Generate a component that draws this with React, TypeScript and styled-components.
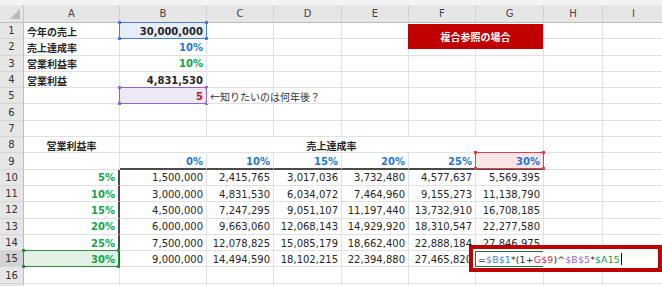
import { createGlobalStyle, styled } from 'styled-components'

const GlobalStyle = createGlobalStyle`
  html, body { margin: 0; padding: 0; background: #fff; }
  body { font-family: "DejaVu Sans", "Noto Sans CJK JP", sans-serif; }
`

const blue = '#1f78d1'
const green = '#10a64a'
const red = '#c00000'
const numFont = `"DejaVu Sans", "Noto Sans CJK JP", sans-serif`
const jpFont = `"Noto Sans CJK JP", "DejaVu Sans", sans-serif`

const COLS = ['A', 'B', 'C', 'D', 'E', 'F', 'G', 'H', 'I']

const Sheet = styled.div`
  position: relative;
  width: 662px;
  height: 286px;
  overflow: hidden;
  padding-top: 5px;
  box-sizing: border-box;
  background: #f3f3f3;
`

const Grid = styled.div`
  display: grid;
  grid-template-columns: 24px 96px 87px 67px 68px 67px 67px 68px 59px 62px;
  grid-template-rows: 18px repeat(17, 16.3px);
  background: #fff;
`

const Corner = styled.div`
  display: flex;
  align-items: flex-end;
  justify-content: flex-end;
  padding: 0 3px 3px 0;
  background: #e6e6e6;
  border-right: 1px solid #c8c8c8;
  border-bottom: 1px solid #bcbcbc;
  box-sizing: border-box;
`

const Triangle = styled.span`
  width: 10px;
  height: 10px;
  background: #b9b9b9;
  clip-path: polygon(100% 0, 100% 100%, 0 100%);
`

const ColHead = styled.div`
  display: flex;
  align-items: center;
  justify-content: center;
  background: #e6e6e6;
  border-right: 1px solid #d2d2d2;
  border-bottom: 1px solid #bcbcbc;
  box-sizing: border-box;
  font-family: ${numFont};
  font-size: 10px;
  color: #444;
`

const RowHead = styled.div<{ $active?: boolean }>`
  display: flex;
  align-items: center;
  justify-content: center;
  background: ${p => (p.$active ? '#d2d2d2' : '#e6e6e6')};
  border-right: 1px solid #bcbcbc;
  border-bottom: 1px solid #d6d6d6;
  box-sizing: border-box;
  font-family: ${numFont};
  font-size: 10px;
  color: #333;
`

const Cell = styled.div<{
  $align?: string
  $color?: string
  $bold?: boolean
  $jp?: boolean
  $span?: number
  $fill?: string
  $mark?: string
  $over?: boolean
  $thickBottom?: boolean
  $thickRight?: boolean
}>`
  position: relative;
  display: flex;
  align-items: center;
  justify-content: ${p => p.$align || 'flex-start'};
  grid-column: span ${p => p.$span || 1};
  padding: 1px 3px 0 3px;
  box-sizing: border-box;
  white-space: nowrap;
  overflow: visible;
  border-right: ${p => (p.$thickRight ? '2px solid #4a4a4a' : '1px solid #e1e1e1')};
  border-bottom: ${p => (p.$thickBottom ? '2px solid #4a4a4a' : '1px solid #e1e1e1')};
  background: ${p => p.$fill || '#fff'};
  font-family: ${p => (p.$jp ? jpFont : numFont)};
  font-size: 10px;
  font-weight: ${p => (p.$bold ? 700 : 400)};
  color: ${p => p.$color || '#262626'};
  z-index: ${p => (p.$over ? 2 : p.$mark ? 1 : 0)};
  ${p =>
    p.$mark &&
    `
    &::after {
      content: '';
      position: absolute;
      inset: -1px -1px -1px -1px;
      border: 1px solid ${p.$mark};
      pointer-events: none;
    }
    &::before {
      content: '';
      position: absolute;
      inset: -2px;
      background:
        linear-gradient(${p.$mark}, ${p.$mark}) left top / 3px 3px no-repeat,
        linear-gradient(${p.$mark}, ${p.$mark}) right top / 3px 3px no-repeat,
        linear-gradient(${p.$mark}, ${p.$mark}) left bottom / 3px 3px no-repeat,
        linear-gradient(${p.$mark}, ${p.$mark}) right bottom / 3px 3px no-repeat;
      pointer-events: none;
    }
  `}
`

const TitleShape = styled.div`
  position: absolute;
  left: 408px;
  top: 24px;
  width: 135px;
  height: 25px;
  display: flex;
  align-items: center;
  justify-content: center;
  background: ${red};
  color: #fff;
  font-family: ${jpFont};
  font-size: 10px;
  font-weight: 700;
  z-index: 3;
`

const FormulaFrame = styled.div`
  position: absolute;
  left: 469px;
  top: 245px;
  width: 193px;
  height: 27px;
  padding: 2px 0 0 2px;
  border: 4px solid ${red};
  box-sizing: border-box;
  background: #fff;
  z-index: 4;
`

const Editor = styled.div`
  display: flex;
  align-items: center;
  width: 68px;
  height: 16px;
  padding-left: 2px;
  border: 1px solid #217346;
  border-right: none;
  box-sizing: border-box;
  white-space: nowrap;
  font-family: ${numFont};
  font-size: 9.4px;
  letter-spacing: 0.15px;
  color: #262626;
`

const Ref = styled.span<{ $c: string }>`
  color: ${p => p.$c};
`

const Caret = styled.span`
  display: inline-block;
  width: 0;
  height: 12px;
  margin-left: 1px;
  border-left: 1px solid #111;
`

type CellSpec = {
  t?: string
  align?: string
  color?: string
  bold?: boolean
  jp?: boolean
  span?: number
  fill?: string
  mark?: string
  over?: boolean
  tb?: boolean
  tr?: boolean
}

const R = 'flex-end'
const num = (t: string): CellSpec => ({ t, align: R })
const empty = (n = 1): CellSpec[] => Array.from({ length: n }, () => ({}))

const table: string[][] = [
  ['1,500,000', '2,415,765', '3,017,036', '3,732,480', '4,577,637', '5,569,395'],
  ['3,000,000', '4,831,530', '6,034,072', '7,464,960', '9,155,273', '11,138,790'],
  ['4,500,000', '7,247,295', '9,051,107', '11,197,440', '13,732,910', '16,708,185'],
  ['6,000,000', '9,663,060', '12,068,143', '14,929,920', '18,310,547', '22,277,580'],
  ['7,500,000', '12,078,825', '15,085,179', '18,662,400', '22,888,184', '27,846,975'],
  ['9,000,000', '14,494,590', '18,102,215', '22,394,880', '27,465,820', ''],
]
const rates = ['5%', '10%', '15%', '20%', '25%', '30%']
const heads = ['0%', '10%', '15%', '20%', '25%', '30%']

const rows: CellSpec[][] = [
  [
    { t: '今年の売上', bold: true, jp: true },
    { t: '30,000,000', align: R, bold: true, fill: '#e8eef9', mark: '#4a7fd6' },
    ...empty(7),
  ],
  [{ t: '売上達成率', bold: true, jp: true }, { t: '10%', align: R, bold: true, color: blue }, ...empty(7)],
  [{ t: '営業利益率', bold: true, jp: true }, { t: '10%', align: R, bold: true, color: green }, ...empty(7)],
  [{ t: '営業利益', bold: true, jp: true }, { t: '4,831,530', align: R, bold: true }, ...empty(7)],
  [
    {},
    { t: '5', align: R, bold: true, color: '#c0142c', fill: '#eee8f6', mark: '#9364c9' },
    { t: '←知りたいのは何年後？', jp: true, color: '#333', over: true },
    ...empty(6),
  ],
  empty(9),
  empty(9),
  [
    { t: '営業利益率', bold: true, jp: true, align: 'center' },
    { t: '売上達成率', bold: true, jp: true, align: 'center', span: 6 },
    ...empty(2),
  ],
  [
    {},
    ...heads.map((t, i) => ({
      t,
      align: R,
      bold: true,
      color: blue,
      tb: true,
      ...(i === 5 ? { fill: '#fbe6e7', mark: '#d8434e' } : {}),
    })),
    ...empty(2),
  ],
  ...table.map((vals, r) => [
    {
      t: rates[r],
      align: R,
      bold: true,
      color: green,
      tr: true,
      ...(r === 5 ? { fill: '#e3f1e5', mark: '#2f8c45' } : {}),
    },
    ...vals.map(num),
    ...empty(2),
  ]),
  empty(9),
  empty(9),
]

export default function App() {
  return (
    <>
      <GlobalStyle />
      <Sheet>
        <Grid>
          <Corner>
            <Triangle />
          </Corner>
          {COLS.map(c => (
            <ColHead key={c}>{c}</ColHead>
          ))}
          {rows.map((cells, r) => [
            <RowHead key={`h${r}`} $active={r === 14}>
              {r < 16 ? r + 1 : ''}
            </RowHead>,
            ...cells.map((c, i) => (
              <Cell
                key={`${r}-${i}`}
                $align={c.align}
                $color={c.color}
                $bold={c.bold}
                $jp={c.jp}
                $span={c.span}
                $fill={c.fill}
                $mark={c.mark}
                $over={c.over}
                $thickBottom={c.tb}
                $thickRight={c.tr}
              >
                {c.t}
              </Cell>
            )),
          ])}
        </Grid>
        <TitleShape>複合参照の場合</TitleShape>
        <FormulaFrame>
          <Editor>
            =<Ref $c="#3f7fd8">$B$1</Ref>*(1+<Ref $c="#e0303c">G$9</Ref>)^
            <Ref $c="#9a5fd0">$B$5</Ref>*<Ref $c="#15963f">$A15</Ref>
            <Caret />
          </Editor>
        </FormulaFrame>
      </Sheet>
    </>
  )
}
